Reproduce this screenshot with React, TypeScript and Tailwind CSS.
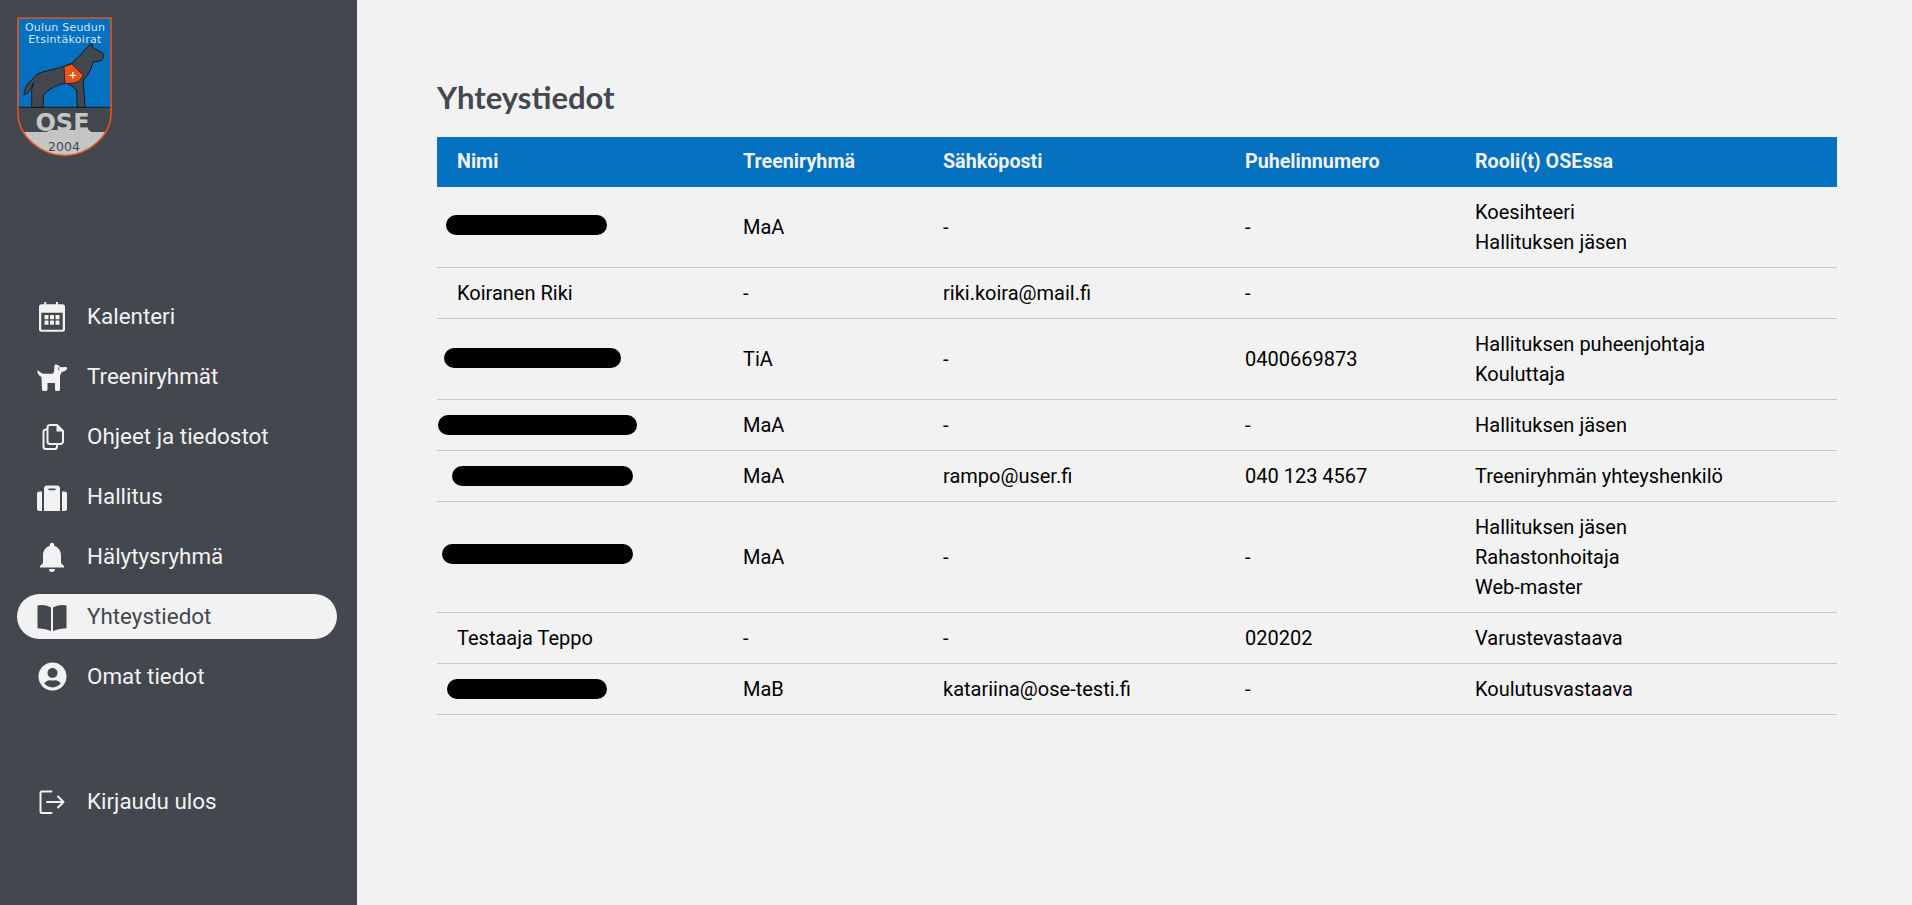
import React from "react";
import { FaUserCircle } from "react-icons/fa";
import { MdNotifications } from "react-icons/md";

function IconBox({ children }: { children: React.ReactNode }) {
  return (
    <svg viewBox="0 0 30 30" className="w-[30px] h-[30px]" fill="currentColor">
      {children}
    </svg>
  );
}

const CalendarIcon = () => (
  <IconBox>
    <path
      fillRule="evenodd"
      d="M7.300 0.500a1 1 0 0 1 2 0V2.300H19V0.500a1 1 0 0 1 2 0V2.300H25.500a2.500 2.500 0 0 1 2.500 2.500V27.200a2.500 2.500 0 0 1 -2.500 2.500H4.500a2.500 2.500 0 0 1 -2.500 -2.500V4.800a2.500 2.500 0 0 1 2.500 -2.500H7.300ZM4.300 10.700V27.700H25.700V10.700Z"
    />
    <rect x="7.500" y="13" width="4" height="4.300" rx="0.500" />
    <rect x="13" y="13" width="4" height="4.300" rx="0.500" />
    <rect x="18.500" y="13" width="4" height="4.300" rx="0.500" />
    <rect x="7.500" y="18.500" width="4" height="4.300" rx="0.500" />
    <rect x="13" y="18.500" width="4" height="4.300" rx="0.500" />
    <rect x="18.500" y="18.500" width="4" height="4.300" rx="0.500" />
  </IconBox>
);

const DogIcon = () => (
  <IconBox>
    <path d="M0.300 8.500C1.500 8 2.500 9.500 3.500 10.500C4.500 11.500 6 11.800 8 11.800H14C15.500 11.800 16.500 11.200 17 10L17.500 3.500C17.700 2.500 18.800 2.300 20 2.700C21.500 3.200 22.800 4 23.500 5.200L29 5C30 5 30.300 5.800 30 6.800C29.500 8.500 27.500 9.500 25 9.800L23 13.500V27.500C23 28.500 22 29 20.500 29C18.800 29 18 28.500 18 27.500V21H10.500V27.500C10.500 28.500 9.500 29 8 29C6 29 5 28.500 5 27.500L4.500 15C2 14 0 11 0.300 8.500Z" />
    <path d="M21.300 5L22 8.500" stroke="#43474e" strokeWidth="0.800" fill="none" />
  </IconBox>
);

const CopyIcon = () => (
  <IconBox>
    <g fill="none" stroke="currentColor" strokeWidth="2" strokeLinejoin="round">
      <path d="M13 3H20L26 9V19.500A2.500 2.500 0 0 1 23.500 22H13A2.500 2.500 0 0 1 10.500 19.500V5.500A2.500 2.500 0 0 1 13 3Z" />
      <path d="M10.500 7.500H9A2.500 2.500 0 0 0 6.500 10V24.500A2.500 2.500 0 0 0 9 27H17.500A2.500 2.500 0 0 0 20 24.500V22" />
    </g>
    <path d="M19.500 2.500L26.500 9.500H19.500Z" />
  </IconBox>
);

const SuitcaseIcon = () => (
  <IconBox>
    <path d="M5 9.500V29H2.500A2.500 2.500 0 0 1 0 26.500V12A2.500 2.500 0 0 1 2.500 9.500Z" />
    <path d="M25 9.500H27.500A2.500 2.500 0 0 1 30 12V26.500A2.500 2.500 0 0 1 27.500 29H25Z" />
    <path
      fillRule="evenodd"
      d="M10 3.500H20A3 3 0 0 1 23 6.500V29H7V6.500A3 3 0 0 1 10 3.500ZM11.500 6.500V8.300H18.500V6.500Z"
    />
  </IconBox>
);

const BookIcon = () => (
  <IconBox>
    <path d="M0.500 3.500Q7.500 2 14 5.500V29Q8 26 1.500 26.500Q0.500 26.500 0.500 25.500Z" />
    <path d="M29.500 3.500Q22.500 2 16 5.500V29Q22 26 28.500 26.500Q29.500 26.500 29.500 25.500Z" />
  </IconBox>
);

const LogoutIcon = () => (
  <IconBox>
    <g fill="none" stroke="currentColor" strokeWidth="2" strokeLinecap="round" strokeLinejoin="round">
      <path d="M14.500 4.500H5A1.500 1.500 0 0 0 3.500 6V24.500A1.500 1.500 0 0 0 5 26H14.500" />
      <path d="M10 15H26.500M21 9.500L26.500 15L21 20.500" />
    </g>
  </IconBox>
);

const nav = [
  { label: "Kalenteri", icon: <CalendarIcon /> },
  { label: "Treeniryhmät", icon: <DogIcon /> },
  { label: "Ohjeet ja tiedostot", icon: <CopyIcon /> },
  { label: "Hallitus", icon: <SuitcaseIcon /> },
  { label: "Hälytysryhmä", icon: <MdNotifications className="w-[36px] h-[36px] shrink-0" /> },
  { label: "Yhteystiedot", icon: <BookIcon />, active: true },
  { label: "Omat tiedot", icon: <FaUserCircle className="w-[29px] h-[29px]" /> },
];

function Logo() {
  const dejavu = "'DejaVu Sans', sans-serif";
  return (
    <svg viewBox="0 0 95 140" className="w-[95px] h-[140px]">
      <defs>
        <clipPath id="shield">
          <path d="M1 1H94V96C94 120 70 138.500 47.500 138.500C25 138.500 1 120 1 96Z" />
        </clipPath>
      </defs>
      <g clipPath="url(#shield)">
        <rect width="95" height="90.500" fill="#0470c0" />
        <rect y="90.500" width="95" height="50" fill="#43474e" />
        <path d="M0 115H30L33 113H72L74 115H95V140H0Z" fill="#c4c6c6" />
      </g>
      <path d="M1 90.300H94" stroke="#111" strokeWidth="0.800" />
      <path d="M1 1H94V96C94 120 70 138.500 47.500 138.500C25 138.500 1 120 1 96Z" fill="none" stroke="#e8541c" strokeWidth="1.600" />
      <text x="48" y="13.500" textAnchor="middle" fill="#cfe6f7" fontSize="11" letterSpacing="0.200" fontFamily={dejavu}>Oulun Seudun</text>
      <text x="48" y="25.500" textAnchor="middle" fill="#cfe6f7" fontSize="11" letterSpacing="0.300" fontFamily={dejavu}>Etsintäkoirat</text>
      <path d="M7 78C7 71 12 65 16.300 61.300C19 57 24 55 30 54C38 52 46 50 54.700 46.300C58 44 62 39 64.700 36.300C68 33 71 29 74.700 26.300L76 31L84 35C86.500 36 87 38 86.500 40C85.500 44 81 44.700 76.300 44.700C75 50 73 54 70.300 58L66.300 63C66.500 70 67.500 82 68 90.300H60.300L59.700 73C55 69 52 66.300 48 66.300C40 68 33 71 26.300 78L26.300 90.300H14.700L14.700 79.700C14 75 15 70 16.500 66C14 72 11 77 7 78Z" fill="#43474e" stroke="#111" strokeWidth="0.900" strokeLinejoin="round" />
      <path d="M47 49.700L54.700 47L66.300 58C64 62 62 64 61.300 64.700C57 66.300 52 66.800 48 66.300Z" fill="#e8541c" stroke="#3a1a10" strokeWidth="0.900" />
      <path d="M52.500 58.300H59M55.800 55V61.500" stroke="#fff" strokeWidth="1.300" />
      <text x="45.500" y="113.700" textAnchor="middle" fill="#c4c6c6" fontSize="24" fontWeight="700" fontFamily={dejavu}>OSE</text>
      <text x="47" y="133.700" textAnchor="middle" fill="#43474e" fontSize="12.500" fontFamily={dejavu}>2004</text>
    </svg>
  );
}

function NavItem({ label, icon, active }: { label: string; icon: React.ReactNode; active?: boolean }) {
  return (
    <a className={"flex items-center h-[45px] mb-[15px] rounded-[23px] pl-5 " + (active ? "bg-[#f2f2f2] text-[#43474e]" : "text-[#f2f2f2]")}>
      <span className="w-[30px] flex justify-center">{icon}</span>
      <span className="ml-5 text-[22.4px]">{label}</span>
    </a>
  );
}

function Redacted({ ml, w, up = 0 }: { ml: number; w: number; up?: number }) {
  return <div className="h-5 rounded-full bg-black" style={{ marginLeft: ml, width: w, marginTop: -up * 2 }} />;
}

type Row = { name: React.ReactNode; group: string; mail: string; phone: string; roles: string[] };

const rows: Row[] = [
  { name: <Redacted ml={9} w={161} up={2} />, group: "MaA", mail: "-", phone: "-", roles: ["Koesihteeri", "Hallituksen jäsen"] },
  { name: "Koiranen Riki", group: "-", mail: "riki.koira@mail.fi", phone: "-", roles: [] },
  { name: <Redacted ml={7} w={177} up={1} />, group: "TiA", mail: "-", phone: "0400669873", roles: ["Hallituksen puheenjohtaja", "Kouluttaja"] },
  { name: <Redacted ml={1} w={199} />, group: "MaA", mail: "-", phone: "-", roles: ["Hallituksen jäsen"] },
  { name: <Redacted ml={15} w={181} />, group: "MaA", mail: "rampo@user.fi", phone: "040 123 4567", roles: ["Treeniryhmän yhteyshenkilö"] },
  { name: <Redacted ml={5} w={191} up={3} />, group: "MaA", mail: "-", phone: "-", roles: ["Hallituksen jäsen", "Rahastonhoitaja", "Web-master"] },
  { name: "Testaaja Teppo", group: "-", mail: "-", phone: "020202", roles: ["Varustevastaava"] },
  { name: <Redacted ml={10} w={160} />, group: "MaB", mail: "katariina@ose-testi.fi", phone: "-", roles: ["Koulutusvastaava"] },
];

export default function App() {
  return (
    <div className="flex h-[905px] overflow-hidden bg-[#f2f2f2] font-['Roboto',sans-serif]">
      <aside className="w-[357px] shrink-0 bg-[#43474e] pl-[17px] pt-[17px] flex flex-col">
        <Logo />
        <nav className="mt-[137px] w-[320px]">
          {nav.map((n) => (
            <NavItem key={n.label} {...n} />
          ))}
          <a className="flex items-center h-[45px] mt-[80px] pl-5 text-[#f2f2f2]">
            <span className="w-[30px] flex justify-center"><LogoutIcon /></span>
            <span className="ml-5 text-[22.4px]">Kirjaudu ulos</span>
          </a>
        </nav>
      </aside>
      <main className="flex-1 pl-[80px] pt-[77px]">
        <h1 className="font-['Lato',sans-serif] font-bold text-[31px] leading-[40px] text-[#43474e] mb-[20px]">Yhteystiedot</h1>
        <table className="table-fixed w-[1400px] border-collapse text-[20px] leading-[30px] text-black">
          <colgroup>
            <col className="w-[286px]" />
            <col className="w-[200px]" />
            <col className="w-[302px]" />
            <col className="w-[230px]" />
            <col className="w-[382px]" />
          </colgroup>
          <thead>
            <tr className="bg-[#0470c0] text-[#f2f2f2] h-[50px] text-left">
              {["Nimi", "Treeniryhmä", "Sähköposti", "Puhelinnumero", "Rooli(t) OSEssa"].map((h) => (
                <th key={h} className="px-5 font-bold text-[19.7px]">{h}</th>
              ))}
            </tr>
          </thead>
          <tbody>
            {rows.map((r, i) => (
              <tr key={i} className="border-b border-[#c8c8c8]">
                <td className={typeof r.name === "string" ? "px-5 py-[10px]" : "py-[10px]"}>{r.name}</td>
                <td className="px-5 py-[10px]">{r.group}</td>
                <td className="px-5 py-[10px]">{r.mail}</td>
                <td className="px-5 py-[10px]">{r.phone}</td>
                <td className="px-5 py-[10px]">
                  {r.roles.map((x) => (
                    <div key={x}>{x}</div>
                  ))}
                </td>
              </tr>
            ))}
          </tbody>
        </table>
      </main>
    </div>
  );
}
